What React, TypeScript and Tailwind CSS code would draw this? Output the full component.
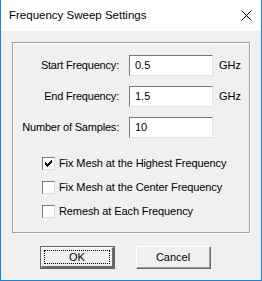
import React from 'react';

// classic win32 dialog: Frequency Sweep Settings
const sans = "font-['Liberation_Sans',Arial,sans-serif]";

function Field({ label, value, unit }: { label: string; value: string; unit?: string }) {
    return (
        <div className="flex items-center h-[21px]">
            <div className="w-[106px] text-right text-[11px] tracking-[-0.2px] text-black leading-none">{label}</div>
            <div className="ml-[10px] w-[84px] h-[21px] bg-white border-t border-l border-[#7a7a7a] border-b-[#e3e3e3] border-r-[#e3e3e3] border flex items-center pl-[5px] text-[11px] text-black">
                {value}
            </div>
            {unit && <div className="ml-[6px] text-[11px] text-black leading-none">{unit}</div>}
        </div>
    );
}

function Check({ label, checked }: { label: string; checked?: boolean }) {
    return (
        <div className="flex items-center h-[13px]">
            <div className="w-[13px] h-[13px] bg-white border border-[#7a7a7a] border-b-[#dcdcdc] border-r-[#dcdcdc] flex items-center justify-center">
                {checked && (
                    <svg width="7" height="7" viewBox="0 0 7 7" shapeRendering="crispEdges">
                        <path d="M6 0h1v3H6zM5 1h1v3H5zM4 2h1v3H4zM3 3h1v3H3zM2 4h1v3H2zM1 3h1v3H1zM0 2h1v3H0z" fill="#000" />
                    </svg>
                )}
            </div>
            <div className="ml-[4px] text-[11px] tracking-[-0.1px] text-black leading-none">{label}</div>
        </div>
    );
}

export default function App() {
    return (
        <div className={`w-[262px] h-[281px] flex flex-col border-l border-r border-b border-[#1883d7] bg-[#f0f0f0] ${sans}`}>
            {/* Title bar */}
            <div className="h-[31px] bg-white flex items-center justify-between pl-[8px] pr-[9px]">
                <span className="text-[11.5px] text-black">Frequency Sweep Settings</span>
                <svg width="11" height="11" viewBox="0 0 11 11">
                    <path d="M0.5 0.5L10.5 10.5M10.5 0.5L0.5 10.5" stroke="#000" strokeWidth="1" />
                </svg>
            </div>

            {/* Body */}
            <div className="flex-1 pt-[11px] pl-[11px]">
                <div className="w-[238px] h-[191px] border border-[#a0a0a0] shadow-[inset_1px_1px_0_#fff,1px_1px_0_#fff] pt-[12px]">
                    <div className="flex flex-col gap-[10px]">
                        <Field label="Start Frequency:" value="0.5" unit="GHz" />
                        <Field label="End Frequency:" value="1.5" unit="GHz" />
                        <Field label="Number of Samples:" value="10" />
                    </div>
                    <div className="flex flex-col gap-[11px] mt-[19px] pl-[29px]">
                        <Check label="Fix Mesh at the Highest Frequency" checked />
                        <Check label="Fix Mesh at the Center Frequency" />
                        <Check label="Remesh at Each Frequency" />
                    </div>
                </div>

                {/* Buttons */}
                <div className="flex mt-[13px] pl-[28px] gap-[21px]">
                    <div className="w-[75px] h-[23px] border border-[#646464] bg-[#f0f0f0]">
                        <div className="w-full h-full border-t border-l border-white border-b-2 border-r-2 border-b-[#696969] border-r-[#696969] flex items-center justify-center p-[2px]">
                            <div className="w-full h-full border border-dotted border-black flex items-center justify-center text-[11px] text-black">OK</div>
                        </div>
                    </div>
                    <div className="w-[75px] h-[23px] border-t border-l border-white border-b border-r border-b-[#696969] border-r-[#696969]">
                        <div className="w-full h-full border-b border-r border-[#a0a0a0] border-t-0 border-l-0 flex items-center justify-center text-[11px] text-black">Cancel</div>
                    </div>
                </div>
            </div>
        </div>
    );
}
